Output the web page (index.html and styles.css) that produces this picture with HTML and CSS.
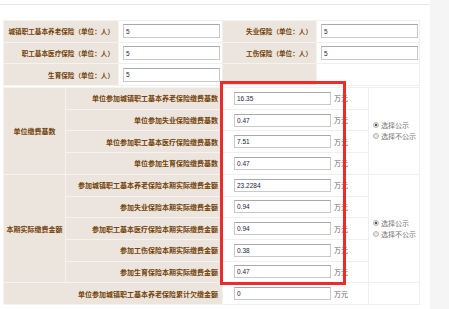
FILE: index.html
```html
<!DOCTYPE html>
<html lang="zh-cn">
<head>
    <meta charset="UTF-8">
    <title>社保缴费信息</title>
    <link rel="stylesheet" href="styles.css">
</head>
<body>
<div class="page">
    <div class="main">
        <div class="topbar"></div>
        <table class="tab tab-top">
            <colgroup>
                <col class="c1"><col class="c2"><col class="c3"><col class="c4">
            </colgroup>
            <tr>
                <td class="lab">城镇职工基本养老保险（单位：人）</td>
                <td class="val"><input class="txt" value="5"></td>
                <td class="lab">失业保险（单位：人）</td>
                <td class="val"><input class="txt" value="5"></td>
            </tr>
            <tr>
                <td class="lab">职工基本医疗保险（单位：人）</td>
                <td class="val"><input class="txt" value="5"></td>
                <td class="lab">工伤保险（单位：人）</td>
                <td class="val"><input class="txt" value="5"></td>
            </tr>
            <tr>
                <td class="lab">生育保险（单位：人）</td>
                <td class="val"><input class="txt" value="5"></td>
                <td class="lab"></td>
                <td class="val"></td>
            </tr>
        </table>
        <table class="tab tab-pay">
            <colgroup>
                <col class="p1"><col class="p2"><col class="p3"><col class="p4">
            </colgroup>
            <!-- 单位缴费基数 -->
            <tr>
                <td class="lab grp" rowspan="4">单位缴费基数</td>
                <td class="lab">单位参加城镇职工基本养老保险缴费基数</td>
                <td class="val num"><input class="txt" value="16.35"><span class="unit">万元</span></td>
                <td class="val pub" rowspan="4">
                    <label><input type="radio" name="pub1" checked>选择公示</label>
                    <label><input type="radio" name="pub1">选择不公示</label>
                </td>
            </tr>
            <tr>
                <td class="lab">单位参加失业保险缴费基数</td>
                <td class="val num"><input class="txt" value="0.47"><span class="unit">万元</span></td>
            </tr>
            <tr>
                <td class="lab">单位参加职工基本医疗保险缴费基数</td>
                <td class="val num"><input class="txt" value="7.51"><span class="unit">万元</span></td>
            </tr>
            <tr>
                <td class="lab">单位参加生育保险缴费基数</td>
                <td class="val num"><input class="txt" value="0.47"><span class="unit">万元</span></td>
            </tr>
            <!-- 本期实际缴费金额 -->
            <tr>
                <td class="lab grp" rowspan="5">本期实际缴费金额</td>
                <td class="lab">参加城镇职工基本养老保险本期实际缴费金额</td>
                <td class="val num"><input class="txt" value="23.2284"><span class="unit">万元</span></td>
                <td class="val pub" rowspan="5">
                    <label><input type="radio" name="pub2" checked>选择公示</label>
                    <label><input type="radio" name="pub2">选择不公示</label>
                </td>
            </tr>
            <tr>
                <td class="lab">参加失业保险本期实际缴费金额</td>
                <td class="val num"><input class="txt" value="0.94"><span class="unit">万元</span></td>
            </tr>
            <tr>
                <td class="lab">参加职工基本医疗保险本期实际缴费金额</td>
                <td class="val num"><input class="txt" value="0.94"><span class="unit">万元</span></td>
            </tr>
            <tr>
                <td class="lab">参加工伤保险本期实际缴费金额</td>
                <td class="val num"><input class="txt" value="0.38"><span class="unit">万元</span></td>
            </tr>
            <tr>
                <td class="lab">参加生育保险本期实际缴费金额</td>
                <td class="val num"><input class="txt" value="0.47"><span class="unit">万元</span></td>
            </tr>
            <tr>
                <td class="lab" colspan="2">单位参加城镇职工基本养老保险累计欠缴金额</td>
                <td class="val num"><input class="txt" value="0"><span class="unit">万元</span></td>
                <td class="val"></td>
            </tr>
        </table>
        <div class="mark"></div>
    </div>
    <div class="side"></div>
</div>
</body>
</html>
```

FILE: styles.css
```css
* {
    padding: 0;
    margin: 0;
    box-sizing: border-box;
}

body {
    background: #fff;
    font-family: "Noto Sans CJK SC", "Liberation Sans", sans-serif;
    font-size: 7px;
    color: #74430a;
}

.page {
    display: flex;
    height: 309px;
}

.main {
    width: 430px;
    position: relative;
    padding-left: 3px;
}

.side {
    flex: 1;
    background: #f5f5f5;
}

.topbar {
    height: 5px;
    border-bottom: 1px solid #e8e8e8;
    margin-left: -3px;
    margin-bottom: 15px;
}

.tab {
    width: 416px;
    border-collapse: collapse;
    table-layout: fixed;
}

.tab td {
    height: 21.7px;
    border: 1px solid #efefef;
    white-space: nowrap;
    overflow: hidden;
    vertical-align: middle;
}

.tab td.lab {
    background: #ebe5dd;
    border-color: #f6f3ef;
    text-align: right;
    padding-right: 4px;
    font-weight: bold;
}

.tab td.grp {
    text-align: center;
    padding-right: 0;
}

.tab-top {
    font-size: 6.6px;
}

.c1 { width: 115px; }
.c2 { width: 104px; }
.c3 { width: 94px; }
.c4 { width: 103px; }

.p1 { width: 62px; }
.p2 { width: 157px; }
.p3 { width: 146px; }
.p4 { width: 51px; }

.tab-pay {
    margin-top: 1px;
}

.tab-top td.val {
    padding-left: 4px;
}

.tab-pay td.num {
    padding-left: 11px;
}

.txt {
    width: 97px;
    height: 14px;
    border: 1px solid #c9c9c9;
    border-top-color: #a9a9a9;
    padding: 0 2px;
    font-family: "Liberation Sans", sans-serif;
    font-size: 6.5px;
    color: #1c1c3c;
    vertical-align: middle;
    outline: none;
}

.tab-pay .txt {
    height: 13px;
}

.unit {
    margin-left: 3px;
    color: #666;
    vertical-align: middle;
}

.pub {
    padding-left: 3px;
    color: #777;
}

.pub label {
    display: flex;
    align-items: center;
    line-height: 11px;
}

.pub input {
    -webkit-appearance: none;
    appearance: none;
    width: 6px;
    height: 6px;
    margin: 0 2px 0 1px;
    border-radius: 50%;
    border: 1px solid #b8b8b8;
    background: #e6e6e6;
}

.pub input:checked {
    background: radial-gradient(circle, #555 0, #555 1.2px, #e6e6e6 1.6px);
}

.mark {
    position: absolute;
    left: 220px;
    top: 81px;
    width: 126px;
    height: 204px;
    border: 3px solid #ee2b2b;
}
```
